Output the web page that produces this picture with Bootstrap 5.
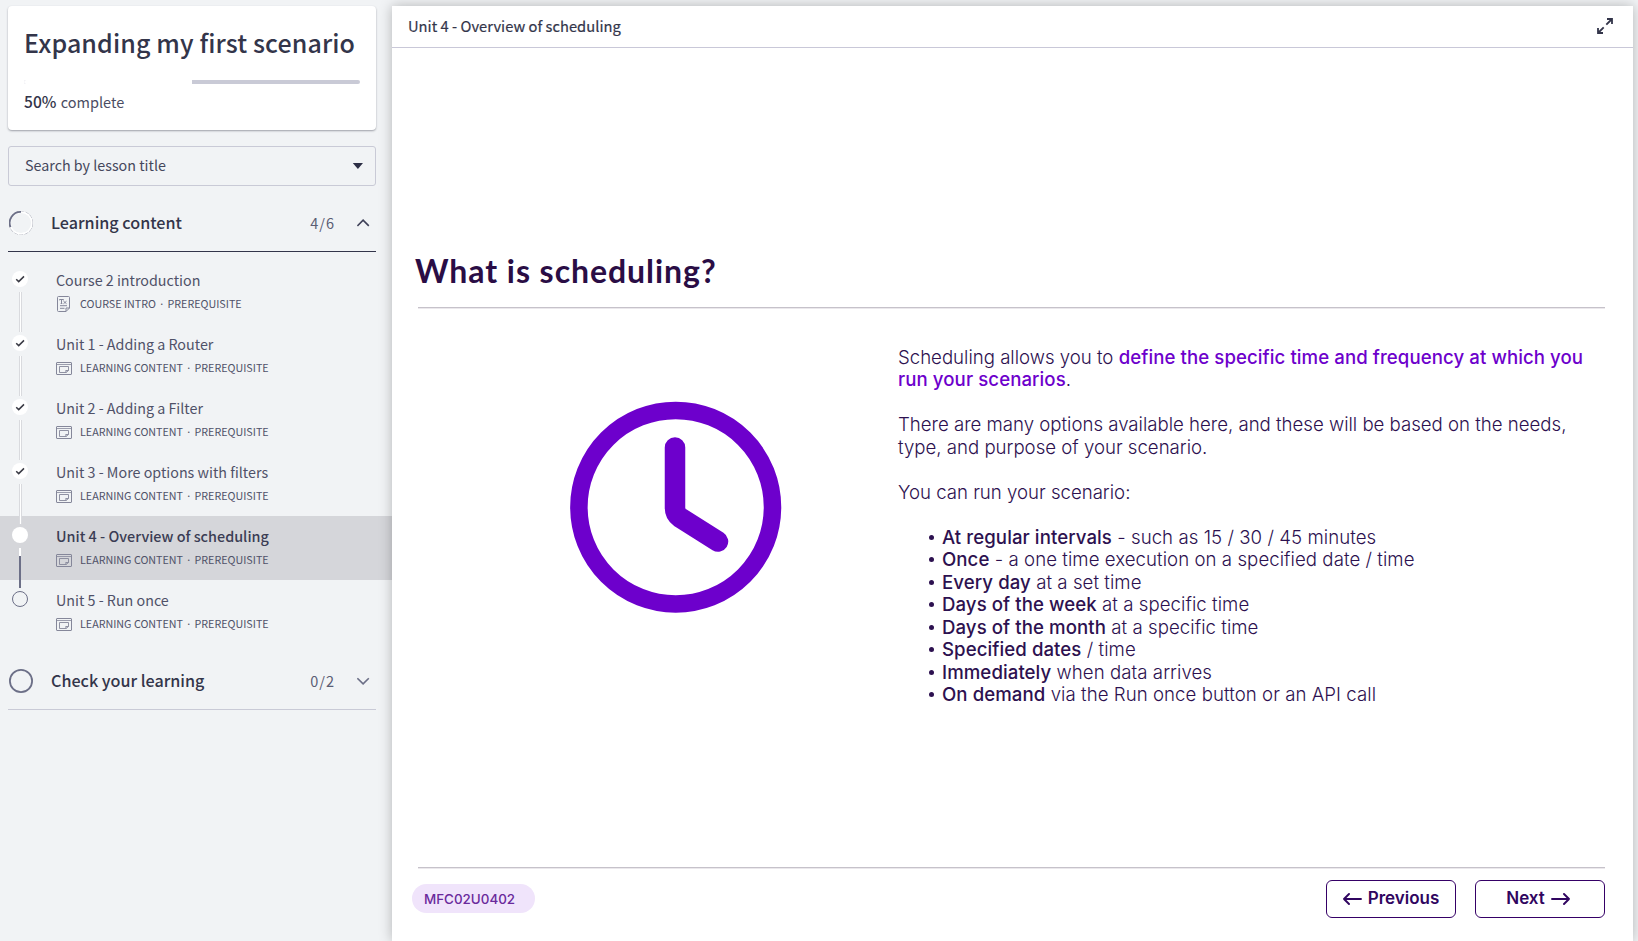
<!DOCTYPE html>
<html lang="en">
<head>
<meta charset="utf-8">
<meta name="viewport" content="width=device-width, initial-scale=1">
<title>Expanding my first scenario</title>
<link href="https://cdn.jsdelivr.net/npm/bootstrap@5.3.0/dist/css/bootstrap.min.css" rel="stylesheet">
<style>
  body { height: 941px; background: #f1f3f5; color: #33354a; font-family: "Noto Sans CJK JP", sans-serif; overflow: hidden; }
  svg { display: block; flex: none; }
  .side { width: 392px; flex: none; padding-top: 6px; }
  .course { height: 124px; margin: 0 16px 0 8px; padding: 15px 16px 0; border-radius: 4px; background: #fff; box-shadow: 0 1px 2px rgba(40,42,60,.42); }
  .course h1 { font-size: 25px; font-weight: 500; line-height: 42px; margin: 0 0 17px; white-space: nowrap; letter-spacing: .11px; }
  .course .progress { height: 4px; border-radius: 2px; background: #c9cad6; }
  .course .progress-bar { background: #fff; }
  .done { font-size: 14.5px; line-height: 20px; margin-top: 7px; color: #4b4d63; }
  .done b { font-weight: 500; font-size: 15.6px; color: #33354a; margin-right: 1px; }
  .lookup { height: 40px; margin: 16px 16px 0 8px; padding: 0 12px 0 16px; border: 1px solid #c9cad6; border-radius: 3px; font-size: 14.3px; color: #45475c; }
  .lookup span { padding-bottom: 2px; }
  .group { height: 66px; margin: 0 16px 0 8px; padding: 9px 6px 0 1px; border-bottom: 1px solid #33354a; }
  .group h2 { font-size: 16.15px; font-weight: 500; line-height: 24px; margin: 0 0 2px 18px; }
  .group .tally { font-size: 14.5px; letter-spacing: 1px; color: #5b5d74; margin-right: 22px; line-height: 24px; }
  .group.shut { border-color: #c9cad6; }
  .lessons { padding-top: 8px; }
  .lesson { height: 64px; padding-left: 12px; color: #4f5168; }
  .rail { width: 16px; flex: none; margin-right: 28px; padding-top: 11px; }
  .dot { width: 16px; height: 16px; border-radius: 50%; background: #fff; flex: none; }
  .dot.todo { background: none; border: 1px solid #6c6f87; }
  .link-line { width: 3px; height: 40px; flex: none; margin: 5px 0 0 7px; border: solid #d9dade; border-width: 0 1px; background: #fff; position: relative; z-index: 1; }
  .link-line.now { width: 2px; background: linear-gradient(#fff 8px, #6c6f87 8px); border: 0; }
  .lesson .name { font-size: 14.3px; line-height: 20px; padding-top: 10px; white-space: nowrap; }
  .lesson .meta { font-size: 10.72px; line-height: 16px; height: 16px; margin-top: 6px; white-space: nowrap; }
  .meta .sep { width: 11.5px; text-align: center; }
  .lesson.current { background: #d5d6da; }
  .lesson.current .name { font-weight: 500; font-size: 14.4px; color: #3b3d54; }
  .stage { margin: 6px 5px 0 0; background: #fff; box-shadow: 0 0 12px rgba(0,0,0,.26); font-family: Inter, sans-serif; color: #2d1150; position: relative; z-index: 2; }
  .stage-head { height: 42px; padding: 0 20px 0 16px; border-bottom: 1px solid #c9c8d8; font: 400 14.7px/38px "Noto Sans CJK JP", sans-serif; color: #33354a; }
  .stage-head span { padding-bottom: 2px; -webkit-text-stroke: .2px #33354a; letter-spacing: .03px; }
  .stage-head svg { margin-bottom: 1px; }
  .slide { padding: 200px 28px 0 26px; }
  .slide h3 { font: 700 32px/46px Lato, sans-serif; letter-spacing: .94px; color: #2a0d45; margin: 0 0 13px -3px; }
  .rule { height: 2px; background: linear-gradient(#c6c2ca 1px, #ebe8ec 1px); }
  .clock { width: 480px; padding: 91px 0 0 151px; flex: none; }
  .copy { font-size: 18.63px; line-height: 22.5px; font-weight: 300; padding-top: 36.7px; white-space: nowrap; }
  .copy p { margin: 0 0 22.5px; }
  .copy strong { font-weight: 500; letter-spacing: .08px; }
  .copy .hot { color: #6d00cc; letter-spacing: .08px; }
  .copy ul { margin: 0; padding: 0; list-style: none; }
  .copy li { padding-left: 32px; letter-spacing: .06px; }
  .copy li::before { content: ""; display: inline-block; width: 5px; height: 5px; border-radius: 50%; background: #2d1150; margin: 0 8px 0 -1px; vertical-align: 4px; }
  .foot { padding: 0 28px 23px 20px; }
  .foot .rule { margin-left: 6px; }
  .code { width: 123px; height: 29px; border-radius: 15px; padding-left: 12px; background: #f0e4fb; color: #6a2a9c; font-size: 13.4px; font-weight: 500; line-height: 30px; margin-top: 7px; }
  .steps { gap: 19px; margin-top: 3px; }
  .step { width: 130px; height: 38px; border: 1px solid #350066; border-radius: 6px; background: #fff; color: #300560; font-size: 17px; font-weight: 600; padding: 0; gap: 6px; }
</style>
</head>
<body class="d-flex">

<svg width="0" height="0" class="position-absolute" aria-hidden="true">
  <symbol id="tick" viewBox="0 0 16 16"><path d="M4.200 8.300 6.700 10.600 12 5.400" fill="none" stroke="#3a3b45" stroke-width="1.500"/></symbol>
  <symbol id="window" viewBox="0 0 16 13"><g fill="none" stroke="#85879a"><rect x=".5" y=".5" width="15" height="12" rx=".5"/><path d="M1 2.500h14" stroke-width=".8"/><path d="M12.500 8.500v-4h-9v6h6.600M9.700 8.500h2.800l-2.400 2z" stroke-width=".9"/></g></symbol>
  <symbol id="doc" viewBox="0 0 14 16"><g fill="none" stroke="#85879a"><path d="M12.500 12V1.500q0-1-1-1h-10q-1 0-1 1v13q0 1 1 1H9L12.500 12H9v3.500"/><path d="M2.500 4.300v-.8h4v.8M4.500 3.500v4M3.700 7.500h1.600M6.500 5.200l3 2.500M9.500 5.200l-3 2.500M3 9.700h7M3 12.300h4.500"/></g></symbol>
</svg>

<aside class="side">
  <div class="course">
    <h1>Expanding my first scenario</h1>
    <div class="progress"><div class="progress-bar w-50"></div></div>
    <div class="done"><b>50%</b> complete</div>
  </div>

  <div class="lookup d-flex align-items-center justify-content-between">
    <span>Search by lesson title</span>
    <svg width="11" height="6" viewBox="0 0 11 6"><path d="M.8 0h10.200L5.900 6z" fill="#2c2e45"/></svg>
  </div>

  <div class="group d-flex align-items-center">
    <svg width="24" height="24" viewBox="0 0 24 24" fill="none"><circle cx="12" cy="12" r="11.400" stroke="#9597a6" stroke-width="1.200" stroke-dasharray="4 1.200"/><circle cx="12" cy="12" r="10.900" stroke="#fff" stroke-width="1.600"/><path d="M12 .9A11.100 11.100 0 0 0 1.500 16.200" stroke="#6c6f87" stroke-width="1.800"/></svg>
    <h2>Learning content</h2>
    <span class="tally ms-auto">4/6</span>
    <svg width="13" height="8" viewBox="0 0 13 8"><path d="M.4 6.900 6.100 1.200 11.800 6.900" fill="none" stroke="#3f4158" stroke-width="1.600"/></svg>
  </div>

  <div class="lessons">
    <div class="lesson d-flex">
      <div class="rail"><div class="dot"><svg width="16" height="16"><use href="#tick"/></svg></div><div class="link-line"></div></div>
      <div><div class="name">Course 2 introduction</div><div class="meta d-flex align-items-center"><svg class="me-2" width="16" height="16"><use href="#doc" width="14" height="16" x="1"/></svg><span>COURSE INTRO</span><span class="sep">·</span><span>PREREQUISITE</span></div></div>
    </div>
    <div class="lesson d-flex">
      <div class="rail"><div class="dot"><svg width="16" height="16"><use href="#tick"/></svg></div><div class="link-line"></div></div>
      <div><div class="name">Unit 1 - Adding a Router</div><div class="meta d-flex align-items-center"><svg class="me-2" width="16" height="13"><use href="#window"/></svg><span>LEARNING CONTENT</span><span class="sep">·</span><span>PREREQUISITE</span></div></div>
    </div>
    <div class="lesson d-flex">
      <div class="rail"><div class="dot"><svg width="16" height="16"><use href="#tick"/></svg></div><div class="link-line"></div></div>
      <div><div class="name">Unit 2 - Adding a Filter</div><div class="meta d-flex align-items-center"><svg class="me-2" width="16" height="13"><use href="#window"/></svg><span>LEARNING CONTENT</span><span class="sep">·</span><span>PREREQUISITE</span></div></div>
    </div>
    <div class="lesson d-flex">
      <div class="rail"><div class="dot"><svg width="16" height="16"><use href="#tick"/></svg></div><div class="link-line"></div></div>
      <div><div class="name">Unit 3 - More options with filters</div><div class="meta d-flex align-items-center"><svg class="me-2" width="16" height="13"><use href="#window"/></svg><span>LEARNING CONTENT</span><span class="sep">·</span><span>PREREQUISITE</span></div></div>
    </div>
    <div class="lesson current d-flex">
      <div class="rail"><div class="dot"></div><div class="link-line now"></div></div>
      <div><div class="name">Unit 4 - Overview of scheduling</div><div class="meta d-flex align-items-center"><svg class="me-2" width="16" height="13"><use href="#window"/></svg><span>LEARNING CONTENT</span><span class="sep">·</span><span>PREREQUISITE</span></div></div>
    </div>
    <div class="lesson d-flex">
      <div class="rail"><div class="dot todo"></div></div>
      <div><div class="name">Unit 5 - Run once</div><div class="meta d-flex align-items-center"><svg class="me-2" width="16" height="13"><use href="#window"/></svg><span>LEARNING CONTENT</span><span class="sep">·</span><span>PREREQUISITE</span></div></div>
    </div>
  </div>

  <div class="group shut d-flex align-items-center">
    <svg width="24" height="24" viewBox="0 0 24 24" fill="none"><circle cx="12" cy="12" r="11.100" stroke="#6c6f87" stroke-width="1.800"/></svg>
    <h2>Check your learning</h2>
    <span class="tally ms-auto">0/2</span>
    <svg width="13" height="8" viewBox="0 0 13 8"><path d="M.4 1.200 6.100 6.900 11.800 1.200" fill="none" stroke="#6c6f87" stroke-width="1.600"/></svg>
  </div>
</aside>

<main class="stage flex-grow-1 d-flex flex-column">
  <div class="stage-head d-flex align-items-center justify-content-between">
    <span>Unit 4 - Overview of scheduling</span>
    <svg width="16" height="16" viewBox="0 0 16 16" fill="none" stroke="#33354a" stroke-width="1.800"><path d="M10 1h5v5M15 1 9.300 6.700M1 10v5h5M1 15l5.700-5.700"/></svg>
  </div>

  <div class="slide flex-grow-1">
    <h3>What is scheduling?</h3>
    <div class="rule"></div>
    <div class="d-flex">
      <div class="clock">
        <svg width="214" height="214" viewBox="0 0 214 214" fill="none" stroke="#6d00cc"><circle cx="106.700" cy="107.200" r="96.800" stroke-width="17.500"/><path d="M106 47.500v60.500q0 6 5 9.500l38 24" stroke-width="20.500" stroke-linecap="round" stroke-linejoin="round"/></svg>
      </div>
      <div class="copy">
        <p>Scheduling allows you to <strong class="hot">define the specific time and frequency at which you<br>run your scenarios</strong>.</p>
        <p>There are many options available here, and these will be based on the needs,<br>type, and purpose of your scenario.</p>
        <p>You can run your scenario:</p>
        <ul>
          <li><strong>At regular intervals</strong> - such as 15 / 30 / 45 minutes</li>
          <li><strong>Once</strong> - a one time execution on a specified date / time</li>
          <li><strong>Every day</strong> at a set time</li>
          <li><strong>Days of the week</strong> at a specific time</li>
          <li><strong>Days of the month</strong> at a specific time</li>
          <li><strong>Specified dates</strong> / time</li>
          <li><strong>Immediately</strong> when data arrives</li>
          <li><strong>On demand</strong> via the Run once button or an API call</li>
        </ul>
      </div>
    </div>
  </div>

  <div class="foot">
    <div class="rule"></div>
    <div class="d-flex align-items-start justify-content-between pt-2">
      <div class="code">MFC02U0402</div>
      <div class="steps d-flex">
        <button type="button" class="step d-flex align-items-center justify-content-center"><svg width="19" height="12" viewBox="0 0 19 12" fill="none" stroke="#300560" stroke-width="1.900" stroke-linecap="round" stroke-linejoin="round"><path d="M18 6H1M6 1 1 6l5 5"/></svg>Previous</button>
        <button type="button" class="step d-flex align-items-center justify-content-center pe-1">Next<svg width="19" height="12" viewBox="0 0 19 12" fill="none" stroke="#300560" stroke-width="1.900" stroke-linecap="round" stroke-linejoin="round"><path d="M1 6h17M13 1l5 5-5 5"/></svg></button>
      </div>
    </div>
  </div>
</main>

<script src="https://cdn.jsdelivr.net/npm/bootstrap@5.3.0/dist/js/bootstrap.bundle.min.js"></script>
</body>
</html>
